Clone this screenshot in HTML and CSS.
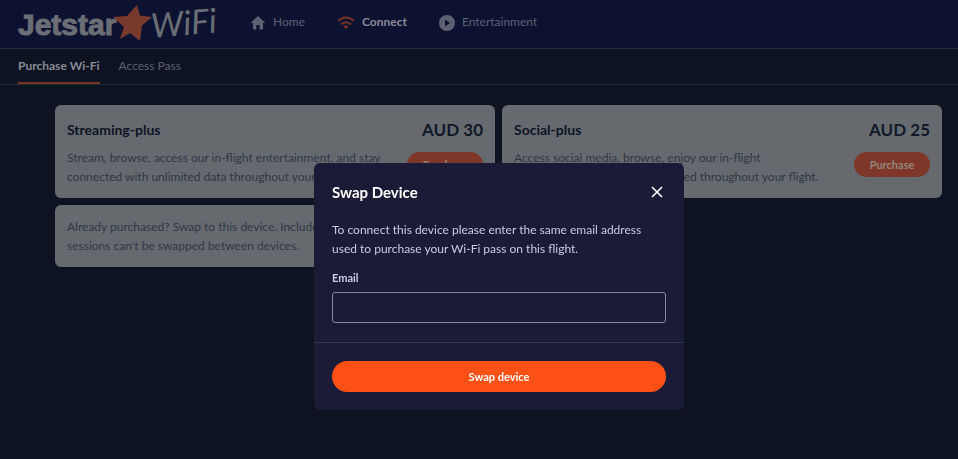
FILE: index.html
```html
<!DOCTYPE html>
<html lang="en">
<head>
<meta charset="utf-8">
<meta name="viewport" content="width=device-width, initial-scale=1">
<title>Jetstar WiFi</title>
<link rel="stylesheet" href="styles.css">
</head>
<body>
<header class="header">
  <a class="logo" href="#">
    <svg width="216" height="48" viewBox="0 0 216 48" role="img" aria-label="Jetstar WiFi">
      <text class="logo-name" x="0" y="35">Jetstar</text>
      <path class="logo-star" d="M119 5L122 15.500L134 17L124 25.500L122 41L112 33L102 39L106 27L95 17L109 16z"/>
      <text class="logo-script" x="0" y="0" transform="translate(134 38) rotate(-5)">WiFi</text>
    </svg>
  </a>
  <nav class="main-nav">
    <a class="nav-link" href="#">
      <svg width="16" height="16" viewBox="0 0 16 16" aria-hidden="true"><path fill="currentColor" d="M8 1l7.500 7H13v6.500H9.700v-4.500H6.300v4.500H3V8H.500z"/></svg>
      <span>Home</span>
    </a>
    <a class="nav-link active" href="#">
      <svg class="wifi" width="18" height="16" viewBox="0 0 18 16" aria-hidden="true"><g fill="none" stroke="currentColor" stroke-width="2"><path d="M1 6Q9-1 17 6M4 9.500Q9 5 14 9.500"/></g><path fill="currentColor" d="M6.300 11.500Q9 9.500 11.700 11.500L9 14z"/></svg>
      <span>Connect</span>
    </a>
    <a class="nav-link" href="#">
      <svg width="16" height="16" viewBox="0 0 16 16" aria-hidden="true"><path fill="currentColor" fill-rule="evenodd" d="M8 0a8 8 0 1 0 0 16A8 8 0 0 0 8 0zM6 4.500l5 3.500-5 3.500z"/></svg>
      <span>Entertainment</span>
    </a>
  </nav>
</header>
<nav class="tabs">
  <a class="tab active" href="#">Purchase Wi-Fi</a>
  <a class="tab" href="#">Access Pass</a>
</nav>
<main class="plans">
  <article class="card">
    <div class="info">
      <h2>Streaming-plus</h2>
      <p>Stream, browse, access our in-flight entertainment, and stay<br>connected with unlimited data throughout your flight.</p>
    </div>
    <div class="offer"><strong>AUD 30</strong><button class="buy" type="button">Purchase</button></div>
  </article>
  <article class="card">
    <div class="info">
      <h2>Social-plus</h2>
      <p>Access social media, browse, enjoy our in-flight<br>entertainment, and stay connected throughout your flight.</p>
    </div>
    <div class="offer"><strong>AUD 25</strong><button class="buy" type="button">Purchase</button></div>
  </article>
  <article class="card">
    <p>Already purchased? Swap to this device. Included<br>sessions can't be swapped between devices.</p>
  </article>
</main>
<div class="overlay">
  <form class="dialog" role="dialog" aria-modal="true" aria-labelledby="dialog-title">
    <div class="dialog-body">
      <div class="dialog-head">
        <h1 id="dialog-title">Swap Device</h1>
        <button class="close" type="button" aria-label="Close"><svg width="12" height="12" viewBox="0 0 12 12" aria-hidden="true"><path d="M1 1l10 10M11 1L1 11" fill="none" stroke="currentColor" stroke-width="1.600"/></svg></button>
      </div>
      <p>To connect this device please enter the same email address<br>used to purchase your Wi-Fi pass on this flight.</p>
      <label for="email">Email</label>
      <input id="email" type="email">
    </div>
    <div class="dialog-foot"><button class="submit" type="submit">Swap device</button></div>
  </form>
</div>
</body>
</html>
```
FILE: styles.css
```css
* { box-sizing: border-box; }
body {
  margin: 0;
  min-height: 100vh;
  background: #0e1322;
  color: #666a79;
  font: 12px/19px Lato, sans-serif;
}
h1, h2, p { margin: 0; font-weight: 700; }
p { font-weight: 400; }
a { color: inherit; text-decoration: none; }
button, input { font: inherit; border: 0; padding: 0; }
.header {
  display: flex;
  align-items: flex-start;
  gap: 16px;
  height: 49px;
  padding: 0 18px;
  background: #0e1231;
  border-bottom: 1px solid #252b3b;
}
.logo, .logo svg { display: block; overflow: visible; }
.logo-name { font: 700 30px "Liberation Sans", sans-serif; fill: #6b6e75; stroke: #6b6e75; stroke-width: 1; }
.logo-script { font: italic 400 34px Lato, sans-serif; fill: #6b6e75; }
.logo-star { fill: #783a2c; }
.main-nav { display: flex; gap: 32px; padding-top: 12px; }
.nav-link { display: flex; align-items: center; gap: 7px; color: #5d6173; }
.nav-link svg { margin-top: 2px; }
.nav-link.active { color: #888b98; font-weight: 700; }
.wifi { color: #783526; }
.tabs {
  display: flex;
  gap: 19px;
  height: 36px;
  padding: 0 18px;
  border-bottom: 1px solid #222b35;
}
.tab { padding-top: 7px; color: #5d6170; }
.tab.active { color: #888b95; font-weight: 700; border-bottom: 2px solid #783526; }
.plans {
  display: grid;
  grid-template-columns: 1fr 1fr;
  gap: 7px;
  padding: 20px 16px 20px 55px;
}
.card {
  display: flex;
  justify-content: space-between;
  padding: 12px;
  background: #666a6f;
  border-radius: 6px;
  color: #303644;
}
.card p { white-space: nowrap; }
.card h2 { margin: 3px 0 8px; font-size: 14px; line-height: 20px; color: #0e1424; }
.offer { display: flex; flex-direction: column; align-items: flex-end; gap: 9px; }
.offer strong { font-size: 17px; line-height: 26px; font-weight: 700; color: #111827; white-space: nowrap; }
.buy { width: 76px; height: 25px; border-radius: 13px; background: #7f3729; color: #96857f; font-size: 11px; font-weight: 700; }
.overlay {
  position: fixed;
  inset: 0;
  display: grid;
  place-items: start center;
  padding: 163px 16px 16px;
  margin-left: 40px;
}
.dialog { width: 100%; max-width: 370px; border-radius: 6px; background: #1b1b38; color: #c9cbe0; }
.dialog-body { padding: 19px 18px; border-bottom: 1px solid #35374f; }
.dialog-head { display: flex; justify-content: space-between; align-items: center; margin-bottom: 18px; padding-right: 3px; }
.dialog h1 { font-size: 15px; line-height: 20px; color: #fff; }
.close { display: flex; padding: 0; background: none; color: #fff; }
.dialog label { display: block; margin: 10px 0 5px; font-size: 11px; font-weight: 700; }
.dialog input { display: block; width: 100%; height: 31px; padding: 0 8px; border: 1px solid #85879f; border-radius: 3px; background: transparent; color: #fff; }
.dialog-foot { padding: 18px; }
.submit { width: 100%; height: 31px; border-radius: 16px; background: #ff5115; color: #fff; font-size: 11px; font-weight: 700; }
```
